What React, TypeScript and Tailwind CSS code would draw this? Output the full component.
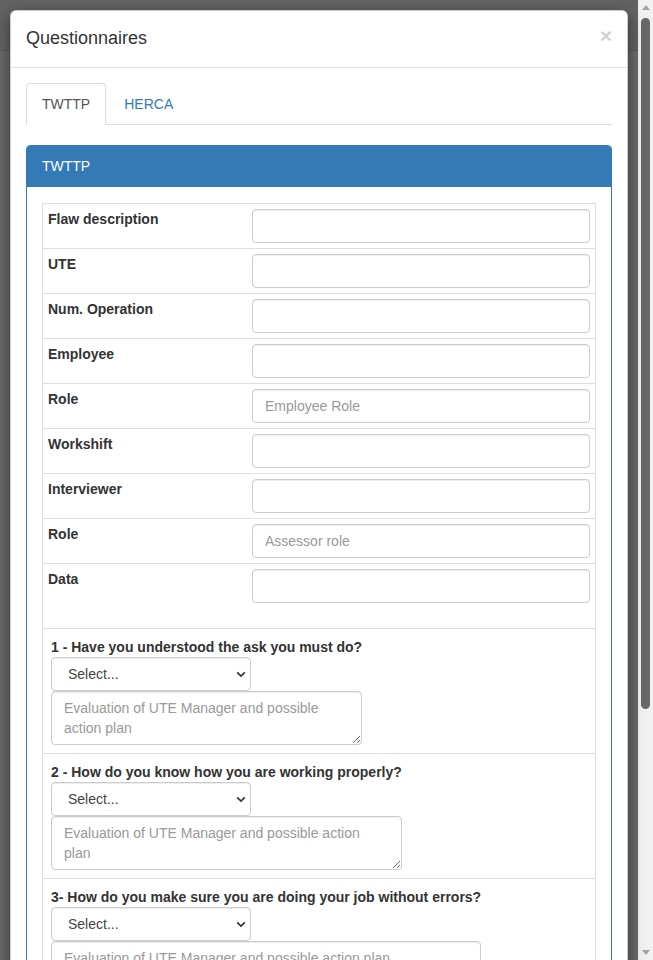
import React from "react";

/* ---------------- DATA ---------------- */

const fields = [
  { label: "Flaw description", placeholder: "" },
  { label: "UTE", placeholder: "" },
  { label: "Num. Operation", placeholder: "" },
  { label: "Employee", placeholder: "" },
  { label: "Role", placeholder: "Employee Role" },
  { label: "Workshift", placeholder: "" },
  { label: "Interviewer", placeholder: "" },
  { label: "Role", placeholder: "Assessor role" },
];

const questions = [
  { text: "1 - Have you understood the ask you must do?", width: "w-[311px]" },
  { text: "2 - How do you know how you are working properly?", width: "w-[351px]" },
  { text: "3- How do you make sure you are doing your job without errors?", width: "w-[430px]" },
];

const inputCls =
  "h-[34px] flex-1 min-w-0 rounded-[4px] border border-[#ccc] bg-white px-[12px] text-[14px] text-[#555] placeholder:text-[#999] shadow-[inset_0_1px_1px_rgba(0,0,0,0.075)] outline-none";

/* ---------------- PIECES ---------------- */

function FieldRow({ label, placeholder }: { label: string; placeholder: string }) {
  return (
    <div className="flex items-start p-[5px]">
      <div className="w-[204px] shrink-0 text-[14px] font-bold leading-[20px] text-[#333]">{label}</div>
      <input className={inputCls} placeholder={placeholder} />
    </div>
  );
}

function SelectBox() {
  return (
    <div className="relative w-[200px]">
      <select className="h-[34px] w-full appearance-none rounded-[4px] border border-[#ccc] bg-white pl-[16px] text-[14px] text-[#444] shadow-[inset_0_1px_1px_rgba(0,0,0,0.075)] outline-none">
        <option>Select...</option>
      </select>
      {/* native-like chevron */}
      <svg
        className="pointer-events-none absolute right-[5px] top-[14px]"
        width="10"
        height="7"
        viewBox="0 0 10 7"
        fill="none"
      >
        <path d="M1.2 1.3 5 5.1l3.8-3.8" stroke="#333" strokeWidth="1.7" />
      </svg>
    </div>
  );
}

function QuestionRow({ text, width }: { text: string; width: string }) {
  return (
    <div className="flex flex-col items-start p-[8px]">
      <div className="text-[14px] font-bold leading-[20px] text-[#333]">{text}</div>
      <SelectBox />
      <textarea
        className={`h-[54px] ${width} rounded-[4px] border border-[#ccc] bg-white px-[12px] py-[6px] text-[14px] leading-[20px] text-[#555] placeholder:text-[#999] shadow-[inset_0_1px_1px_rgba(0,0,0,0.075)] outline-none`}
        placeholder="Evaluation of UTE Manager and possible action plan"
      />
    </div>
  );
}

/* ---------------- MAIN COMPONENT ---------------- */

export default function App() {
  return (
    <div className="flex h-[960px] w-[653px] overflow-hidden font-['Liberation_Sans',Arial,sans-serif]">
      {/* PAGE UNDER THE BACKDROP */}
      <div className="relative flex flex-1 flex-col bg-[#6a6a6a]">
        <div className="h-[51px] border-b border-[#5c5c5c] bg-[#636363]" />

        {/* MODAL */}
        <div className="absolute left-[10px] right-[10px] top-[10px] rounded-[6px] border border-black/20 bg-white shadow-[0_5px_15px_rgba(0,0,0,0.5)]">
          {/* HEADER */}
          <div className="flex items-start justify-between border-b border-[#e5e5e5] px-[15px] pb-[17px] pt-[15px]">
            <h4 className="text-[18px] leading-[24px] text-[#333]">Questionnaires</h4>
            <button className="mt-[-1px] text-[21px] font-bold leading-[21px] text-black/20">×</button>
          </div>

          {/* BODY */}
          <div className="p-[15px]">
            {/* TABS */}
            <div className="flex border-b border-[#ddd] text-[14px] leading-[20px]">
              <div className="mb-[-1px] mr-[2px] rounded-t-[4px] border border-[#ddd] border-b-white bg-white px-[15px] py-[10px] text-[#555]">
                TWTTP
              </div>
              <div className="mb-[-1px] border border-transparent px-[15px] py-[10px] text-[#337ab7]">HERCA</div>
            </div>

            {/* PANEL */}
            <div className="mt-[20px] rounded-[4px] border border-[#337ab7]">
              <div className="rounded-t-[3px] border-b border-[#337ab7] bg-[#337ab7] px-[15px] py-[10px] text-[14px] leading-[20px] text-white">
                TWTTP
              </div>
              <div className="px-[15px] pb-[15px] pt-[16px]">
                <div className="divide-y divide-[#ddd] border border-[#ddd]">
                  {fields.map((f, i) => (
                    <FieldRow key={i} label={f.label} placeholder={f.placeholder} />
                  ))}
                  <div className="flex items-start px-[5px] pb-[25px] pt-[5px]">
                    <div className="w-[204px] shrink-0 text-[14px] font-bold leading-[20px] text-[#333]">Data</div>
                    <input className={inputCls} />
                  </div>
                  {questions.map((q, i) => (
                    <QuestionRow key={i} text={q.text} width={q.width} />
                  ))}
                </div>
              </div>
            </div>
          </div>
        </div>
      </div>

      {/* SCROLLBAR */}
      <div className="flex w-[15px] flex-col bg-[#f1f1f1]">
        <div className="flex h-[15px] items-center justify-center">
          <svg width="8" height="5" viewBox="0 0 8 5">
            <path d="M0 5 4 0l4 5z" fill="#a3a3a3" />
          </svg>
        </div>
        <div className="flex flex-1 justify-center pt-[3px]">
          <div className="h-[691px] w-[9px] rounded-full bg-[#686868]" />
        </div>
        <div className="flex h-[15px] items-center justify-center">
          <svg width="8" height="5" viewBox="0 0 8 5">
            <path d="M0 0h8L4 5z" fill="#a3a3a3" />
          </svg>
        </div>
      </div>
    </div>
  );
}
